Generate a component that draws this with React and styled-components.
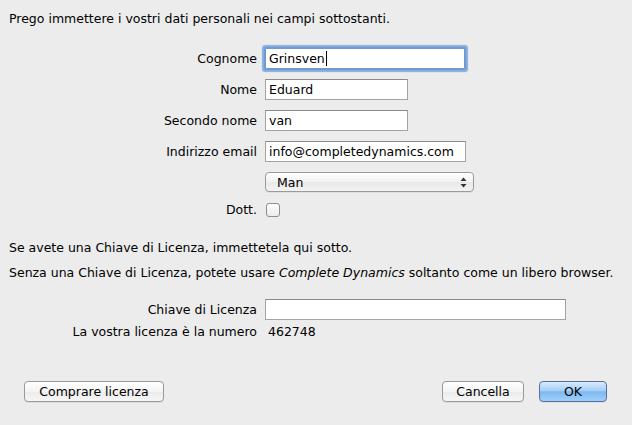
import React from "react";
import styled, { createGlobalStyle } from "styled-components";

const GlobalStyle = createGlobalStyle`
  html, body {
    margin: 0;
    padding: 0;
    background: #ececec;
  }
  body {
    font-family: "DejaVu Sans", "Liberation Sans", sans-serif;
    font-size: 12.5px;
    color: #000;
  }
`;

const Window = styled.div`
  width: 632px;
  height: 425px;
  box-sizing: border-box;
  background: #ececec;
  padding-top: 11px;
  display: flex;
  flex-direction: column;
  overflow: hidden;
`;

const Paragraph = styled.p`
  margin: 0;
  padding-left: 9px;
  line-height: 16px;
  white-space: nowrap;
  margin-top: ${(p) => p.$top || 0}px;
`;

const FormGrid = styled.div`
  display: grid;
  grid-template-columns: 257px auto;
  column-gap: 8px;
  row-gap: ${(p) => p.$rowGap}px;
  margin-top: ${(p) => p.$top}px;
  align-items: center;
`;

const Label = styled.div`
  text-align: right;
  white-space: nowrap;
  line-height: 16px;
`;

const Value = styled.div`
  line-height: 16px;
  padding-left: 3px;
`;

const TextField = styled.div`
  box-sizing: border-box;
  width: ${(p) => p.$width}px;
  height: 21px;
  background: #fff;
  border: 1px solid #a3a3a3;
  border-top-color: #8a8a8a;
  padding-left: 3px;
  display: flex;
  align-items: center;
  white-space: nowrap;
  ${(p) =>
    p.$focused &&
    `
    box-shadow: 0 0 0 1px #6f9ad3, 0 0 1px 3px #86afe0;
    border-radius: 1px;
    border-color: #6f9ad3;
  `}
`;

const Caret = styled.span`
  display: inline-block;
  width: 1px;
  height: 15px;
  background: #000;
  margin-left: 1px;
`;

const Select = styled.div`
  box-sizing: border-box;
  width: 209px;
  height: 20px;
  border: 1px solid #9a9a9a;
  border-radius: 4px;
  background: linear-gradient(#ffffff, #f1f1f1 50%, #e8e8e8 51%, #f3f3f3);
  display: flex;
  align-items: center;
  justify-content: space-between;
  padding: 0 6px 0 11px;
  box-shadow: 0 1px 0 rgba(0, 0, 0, 0.05);
`;

const Checkbox = styled.div`
  box-sizing: border-box;
  width: 14px;
  height: 14px;
  border: 1px solid #8f8f8f;
  border-radius: 3px;
  background: linear-gradient(#fdfdfd, #ececec);
  margin-left: 1px;
`;

const Footer = styled.div`
  margin-top: auto;
  margin-bottom: 23px;
  display: flex;
  align-items: center;
  padding: 0 25px 0 24px;
`;

const Spacer = styled.div`
  flex: 1;
`;

const Button = styled.button`
  box-sizing: border-box;
  width: ${(p) => p.$width}px;
  height: 21px;
  margin-left: ${(p) => p.$ml || 0}px;
  font-family: inherit;
  font-size: 12.5px;
  color: #000;
  padding: 0;
  border: 1px solid #999;
  border-radius: 4px;
  background: linear-gradient(#ffffff, #f4f4f4 50%, #ebebeb 51%, #f6f6f6);
  box-shadow: 0 1px 0 rgba(0, 0, 0, 0.06);
  ${(p) =>
    p.$primary &&
    `
    border-color: #5a6f9c;
    background: linear-gradient(#d7ebfd, #a7cff6 45%, #7fb8f0 52%, #9ed0fb 100%);
  `}
`;

const Arrows = () => (
  <svg width="7" height="11" viewBox="0 0 7 11">
    <path d="M3.5 0.5 L6.5 4 L0.5 4 Z" fill="#333" />
    <path d="M3.5 10.5 L6.5 7 L0.5 7 Z" fill="#333" />
  </svg>
);

export default function App() {
  return (
    <>
      <GlobalStyle />
      <Window>
        <Paragraph>Prego immettere i vostri dati personali nei campi sottostanti.</Paragraph>

        <FormGrid $top={21} $rowGap={10}>
          <Label>Cognome</Label>
          <TextField $width={200} $focused>
            Grinsven
            <Caret />
          </TextField>

          <Label>Nome</Label>
          <TextField $width={143}>Eduard</TextField>

          <Label>Secondo nome</Label>
          <TextField $width={143}>van</TextField>

          <Label>Indirizzo email</Label>
          <TextField $width={201}>info@completedynamics.com</TextField>

          <Label />
          <Select>
            <span>Man</span>
            <Arrows />
          </Select>

          <Label>Dott.</Label>
          <Checkbox />
        </FormGrid>

        <Paragraph $top={22}>Se avete una Chiave di Licenza, immettetela qui sotto.</Paragraph>
        <Paragraph $top={9}>
          Senza una Chiave di Licenza, potete usare <i>Complete Dynamics</i> soltanto come un libero browser.
        </Paragraph>

        <FormGrid $top={18} $rowGap={4}>
          <Label>Chiave di Licenza</Label>
          <TextField $width={301} />
          <Label>La vostra licenza è la numero</Label>
          <Value>462748</Value>
        </FormGrid>

        <Footer>
          <Button $width={140}>Comprare licenza</Button>
          <Spacer />
          <Button $width={82}>Cancella</Button>
          <Button $width={68} $ml={15} $primary>
            OK
          </Button>
        </Footer>
      </Window>
    </>
  );
}
